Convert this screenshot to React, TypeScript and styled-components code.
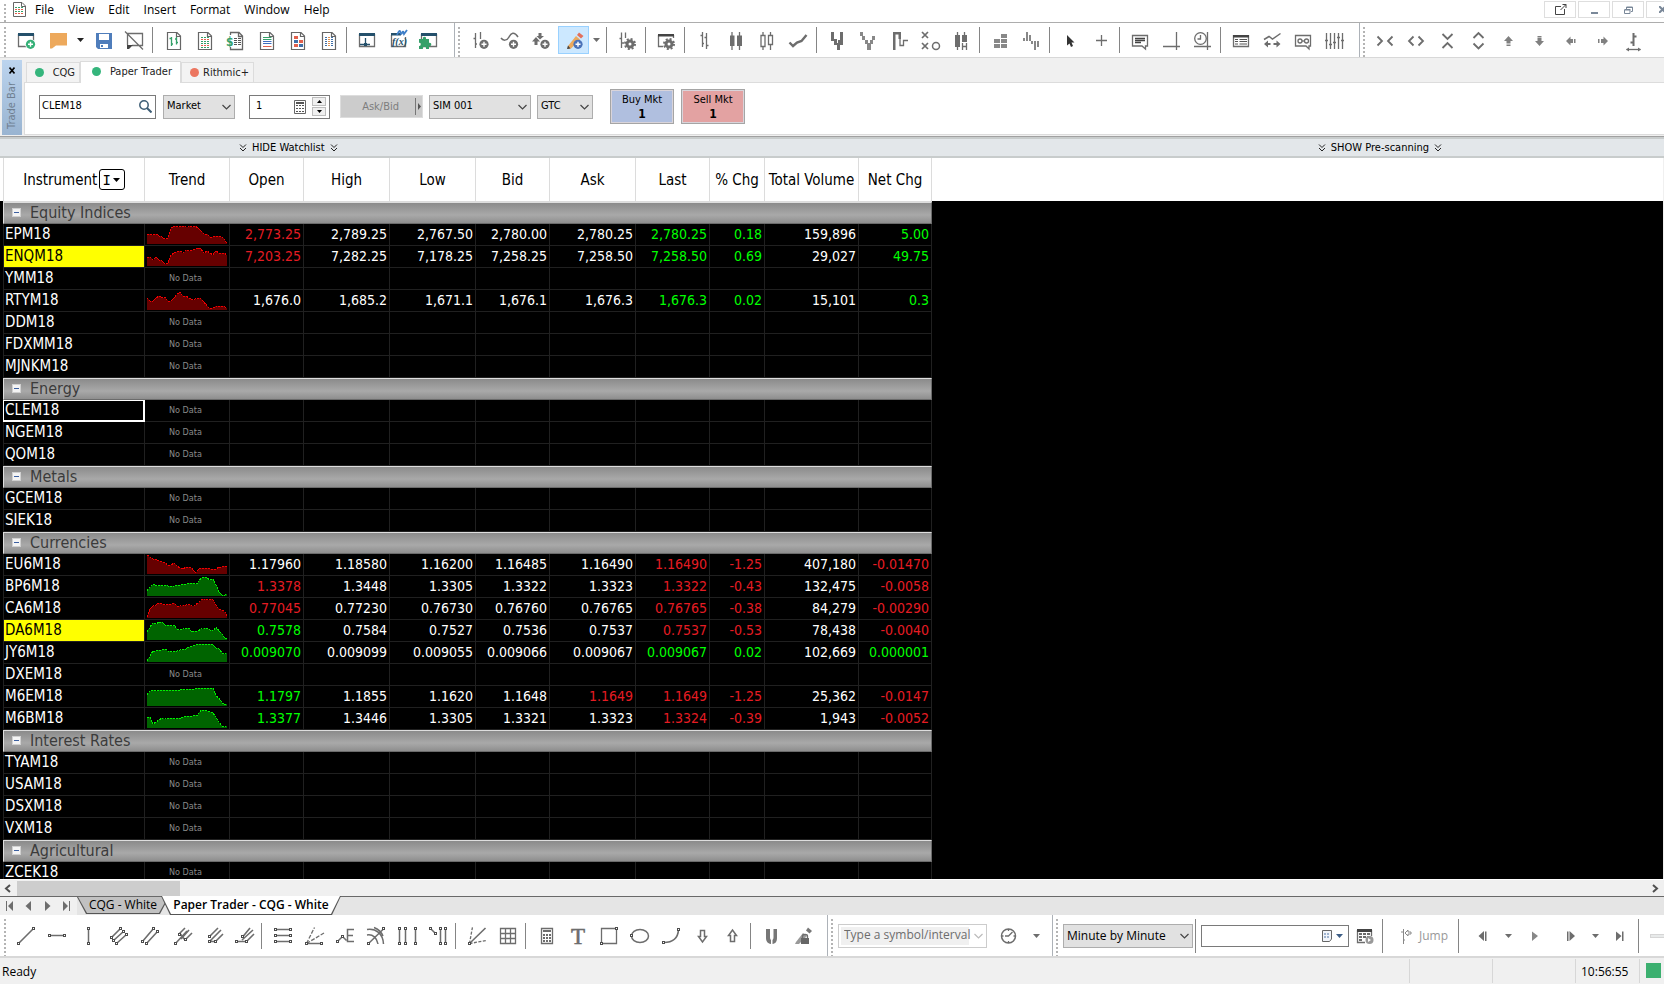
import React from "react";
import styled, { createGlobalStyle, css } from "styled-components";

const tahoma = `"DejaVu Sans Condensed", "DejaVu Sans", sans-serif`;
const segoe = `"Open Sans", "Noto Sans", sans-serif`;

const GlobalStyle = createGlobalStyle`
  *, *::before, *::after { box-sizing: border-box; }
  body { margin: 0; background: #f0f0f0; font-family: ${segoe}; font-size: 12px; color: #000; }
  button, input, select { font: inherit; color: inherit; margin: 0; padding: 0; border-radius: 0; }
  button { border: 0; background: none; }
  svg { display: block; flex: none; }
`;

/* ---------- page frame ---------- */

const Page = styled.div`
  display: flex;
  flex-direction: column;
  height: 100vh;
  overflow: hidden;
`;

const Grip = styled.span`
  flex: none;
  width: 2px;
  align-self: stretch;
  margin: 2px 5px 0 3px;
  background: repeating-linear-gradient(#fff 0 2px, #b4b4b4 2px 4px);
`;

const MenuBar = styled.header`
  display: flex;
  align-items: stretch;
  height: 23px;
  flex: none;
  padding-left: 1px;
  background: #fff;
  border-bottom: 1px solid #adadad;
`;

const AppMark = styled.span`
  align-self: center;
  padding: 0 9px 4px 2px;
`;

const MenuNav = styled.nav`
  display: flex;
  align-items: center;
  gap: 14px;
  flex: 1;
  padding-bottom: 3px;
`;

const MenuItem = styled.button`
  line-height: 16px;
`;

const WindowButtons = styled.div`
  display: flex;
  gap: 2px;
  padding-top: 1px;
  width: 120px;
  overflow: hidden;
`;

const WindowButton = styled.button`
  display: flex;
  align-items: center;
  justify-content: center;
  flex: none;
  width: 32px;
  height: 17px;
  border: 1px solid #dedede;
  background: #fff;
`;

/* ---------- toolbars ---------- */

const Toolbar = styled.div<{ $tall?: boolean }>`
  display: flex;
  align-items: stretch;
  flex: none;
  height: ${(p) => (p.$tall ? 43 : 35)}px;
  padding-left: 1px;
  background: #fff;
  border-bottom: ${(p) => (p.$tall ? 2 : 1)}px solid #d8d8d8;
  overflow: hidden;
`;

const ToolGroup = styled.div<{ $last?: boolean; $pad?: number }>`
  display: flex;
  align-items: center;
  flex: ${(p) => (p.$last ? "1" : "none")};
  padding-right: ${(p) => p.$pad ?? 9}px;
  border-right: ${(p) => (p.$last ? "0" : "1px solid #adb2b8")};
`;

const ToolButton = styled.button<{ $active?: boolean; $width?: number }>`
  display: flex;
  align-items: center;
  justify-content: center;
  flex: none;
  width: ${(p) => p.$width ?? 31}px;
  height: 28px;
  color: #6d6d6d;
  ${(p) =>
    p.$active &&
    css`
      background: #cce8ff;
      box-shadow: inset 0 0 0 1px #99d1ff;
    `}
`;

const Separator = styled.span<{ $height?: number }>`
  flex: none;
  width: 1px;
  height: ${(p) => p.$height ?? 26}px;
  margin: 0 5px 0 2px;
  background: #858585;
`;

/* ---------- trade bar ---------- */

const TradeBar = styled.section`
  display: flex;
  flex: none;
  height: 79px;
  padding: 2px 0 1px 2px;
  background: #f0f0f0;
  border-bottom: 1px solid #a0a0a0;
`;

const TradeHandle = styled.div`
  display: flex;
  flex-direction: column;
  align-items: center;
  gap: 8px;
  width: 20px;
  padding-top: 7px;
  background: linear-gradient(#bcd4ee, #99b4d1);
  font: 11px/14px ${tahoma};
  color: #6f7f90;
`;

const HandleLabel = styled.span`
  writing-mode: vertical-rl;
  transform: rotate(180deg);
`;

const TradeMain = styled.div`
  display: flex;
  flex-direction: column;
  flex: 1;
  margin-left: 2px;
`;

const AccountTabs = styled.div`
  display: flex;
  align-items: flex-end;
  height: 22px;
  padding-left: 2px;
`;

const AccountTab = styled.button<{ $active?: boolean; $width: number }>`
  display: flex;
  align-items: center;
  justify-content: space-between;
  width: ${(p) => p.$width}px;
  height: ${(p) => (p.$active ? 22 : 20)}px;
  margin-bottom: ${(p) => (p.$active ? -1 : 0)}px;
  padding: ${(p) => (p.$active ? "0 8px 2px 11px" : "0 4px 0 8px")};
  position: relative;
  border: 1px solid #dcdcdc;
  border-bottom: 0;
  background: ${(p) => (p.$active ? "#fff" : "#f3f3f3")};
  font: 11px/14px ${tahoma};
  color: #222;
`;

const Dot = styled.span<{ $color: string }>`
  width: 9px;
  height: 9px;
  border-radius: 50%;
  background: ${(p) => p.$color};
`;

const OrderForm = styled.form`
  display: flex;
  align-items: center;
  flex: 1;
  padding: 0 0 4px 14px;
  background: #fff;
  border: 1px solid #dcdcdc;
  border-right: 0;
  font: 11px/14px ${tahoma};
`;

const Field = styled.div<{ $width: number; $gap?: number }>`
  display: flex;
  align-items: center;
  position: relative;
  width: ${(p) => p.$width}px;
  height: 24px;
  margin-right: ${(p) => p.$gap ?? 6}px;
  padding-right: 3px;
  border: 1px solid #7a7a7a;
  background: #fff;
`;

const TextInput = styled.input<{ $indent?: number }>`
  flex: 1;
  min-width: 0;
  height: 100%;
  padding: 0 0 3px ${(p) => p.$indent ?? 2}px;
  border: 0;
  outline: 0;
  background: transparent;
`;

const SelectBox = styled.div<{ $width: number; $gap?: number; $light?: boolean }>`
  position: relative;
  flex: none;
  width: ${(p) => p.$width}px;
  height: 24px;
  margin-right: ${(p) => p.$gap ?? 0}px;
  & > select {
    appearance: none;
    width: 100%;
    height: 100%;
    padding: ${(p) => (p.$light ? "0 14px 2px 5px" : "0 18px 1px 3px")};
    border: 1px solid ${(p) => (p.$light ? "#ccc" : "#adadad")};
    background: ${(p) => (p.$light ? "linear-gradient(#f0f0f0, #f0f0f0) 2px 2px / 128px 18px no-repeat #fff" : "#e1e1e1")};
    color: ${(p) => (p.$light ? "#6d6d6d" : "#000")};
    outline: 0;
  }
  & > svg {
    position: absolute;
    right: 3px;
    top: 9px;
    pointer-events: none;
    color: ${(p) => (p.$light ? "#bbb" : "#444")};
  }
`;

const Spinner = styled.div`
  display: flex;
  flex-direction: column;
  gap: 1px;
  margin-left: 6px;
`;

const SpinButton = styled.button`
  display: flex;
  align-items: center;
  justify-content: center;
  width: 14px;
  height: 9px;
  border: 1px solid #bdbdbd;
  background: #f0f0f0;
`;

const AskBid = styled.button`
  display: flex;
  align-items: center;
  justify-content: flex-end;
  gap: 16px;
  width: 83px;
  height: 23px;
  margin-right: 6px;
  border: 1px solid #ddd;
  background: #ccc;
  color: #7d7d7d;
`;

const MarketButton = styled.button<{ $tone: string }>`
  display: flex;
  flex-direction: column;
  align-items: center;
  justify-content: center;
  width: 64px;
  height: 35px;
  margin-right: 7px;
  border: 1px solid #a5a5a5;
  box-shadow: inset 0 0 0 1px #d9d4da;
  background: ${(p) => p.$tone};
  font: 11px/14px ${tahoma};
  & > b {
    font-size: 12px;
  }
`;

/* ---------- watchlist ---------- */

const PaneBar = styled.div`
  display: flex;
  align-items: center;
  justify-content: space-between;
  flex: none;
  height: 21px;
  padding: 0 222px 0 239px;
  background: #e3e7ea;
  border: solid #c8cccc;
  border-width: 2px 0;
`;

const PaneToggle = styled.button`
  display: flex;
  align-items: center;
  gap: 5px;
  font: 11px/14px ${tahoma};
`;

const Sheet = styled.main`
  flex: 1;
  min-height: 0;
  overflow: hidden;
  margin-right: 1px;
  padding-left: 3px;
  background: linear-gradient(#fff 43px, #000 43px);
`;

const Quotes = styled.table`
  table-layout: fixed;
  width: 929px;
  border-collapse: separate;
  border-spacing: 0;
  font: 14px/18px ${tahoma};
  color: #fff;
`;

const HeadCell = styled.th`
  height: 44px;
  padding: 0;
  border-right: 1px solid #dcdcdc;
  border-bottom: 1px solid #dcdcdc;
  background: #fff;
  color: #000;
  font-size: 15px;
  font-weight: normal;
  white-space: nowrap;
  &:first-child {
    border-left: 1px solid #dcdcdc;
  }
`;

const HeadInner = styled.div`
  display: flex;
  align-items: center;
  justify-content: center;
  gap: 2px;
`;

const SortButton = styled.button`
  display: flex;
  align-items: center;
  gap: 2px;
  height: 21px;
  padding: 0 4px 0 2px;
  border: 1px solid #000;
  border-radius: 3px;
  font-family: "DejaVu Sans Mono", monospace;
  font-size: 14px;
`;

const SectionCell = styled.td`
  height: 22px;
  padding: 0 0 0 8px;
  border: solid #dedede;
  border-width: 1px 1px 1px 1px;
  border-bottom-color: #6b6b6b;
  border-right-color: #6b6b6b;
  background: linear-gradient(#8b8b8b, #a9a9a9 60%, #8e8e8e);
  color: #3b3b3b;
  font-size: 16px;
`;

const SectionInner = styled.div`
  display: flex;
  align-items: center;
  gap: 9px;
  height: 20px;
`;

const Collapse = styled.button`
  display: flex;
  width: 9px;
  height: 9px;
  margin-bottom: 2px;
  background: #f4f4f4;
  border: 1px solid #d0d0d0;
`;

const SymbolCell = styled.th<{ $mark?: "hot" | "cursor" }>`
  height: 22px;
  padding: 0 0 1px 1px;
  border: solid ${(p) => (p.$mark === "cursor" ? "#fff" : "#202020")};
  border-width: 0 1px 1px 1px;
  text-align: left;
  font-size: 15px;
  font-weight: normal;
  background: ${(p) => (p.$mark === "hot" ? "#ff0" : "#000")};
  color: ${(p) => (p.$mark === "hot" ? "#000" : "#fff")};
  ${(p) => p.$mark === "cursor" && "box-shadow: inset 0 1px #fff, inset -1px -1px #fff;"}
`;

const tones = { w: "#fff", g: "#0f0", r: "#e51c23" };
type Tone = keyof typeof tones;

const ValueCell = styled.td<{ $tone: Tone }>`
  height: 22px;
  padding: 0 2px 1px 0;
  border: solid #202020;
  border-width: 0 1px 1px 0;
  text-align: right;
  color: ${(p) => tones[p.$tone]};
`;

const TrendCell = styled.td`
  height: 22px;
  padding: 0 2px 1px;
  border: solid #202020;
  border-width: 0 1px 1px 0;
`;

const NoData = styled.div`
  padding-right: 3px;
  font-size: 9px;
  line-height: 18px;
  text-align: center;
  color: #8a8a8a;
`;

/* ---------- bottom bars ---------- */

const ScrollTrack = styled.div`
  display: flex;
  align-items: center;
  flex: none;
  height: 17px;
  padding: 0 5px 0 4px;
  background: #f0f0f0;
  border-top: 1px solid #fff;
`;

const ScrollThumb = styled.div`
  width: 163px;
  height: 15px;
  margin: 0 auto 0 5px;
  background: #cdcdcd;
`;

const SheetTabs = styled.div`
  display: flex;
  align-items: flex-start;
  flex: none;
  height: 19px;
  background: #e5e5e5;
  border-top: 1px solid #696969;
`;

const SheetNav = styled.div`
  display: flex;
  height: 18px;
  width: 77px;
  background: #f0f0f0;
`;

const SheetNavButton = styled.button`
  display: flex;
  align-items: center;
  justify-content: center;
  width: 19px;
  color: #6d6d6d;
`;

const SheetTab = styled.button<{ $active?: boolean; $width: number }>`
  position: relative;
  z-index: 0;
  width: ${(p) => p.$width}px;
  height: ${(p) => (p.$active ? 19 : 17)}px;
  margin: ${(p) => (p.$active ? "-1px 0 0 -8px" : "0")};
  padding-bottom: 1px;
  line-height: 16px;
  white-space: nowrap;
  font-weight: ${(p) => (p.$active ? 600 : 400)};
  background: #555;
  clip-path: polygon(0 0, 9px 100%, calc(100% - 9px) 100%, 100% 0);
  &::before {
    content: "";
    position: absolute;
    inset: 0;
    z-index: -1;
    background: ${(p) => (p.$active ? "#fff" : "#c1c1c1")};
    clip-path: polygon(1px 0, 10px calc(100% - 1px), calc(100% - 10px) calc(100% - 1px), calc(100% - 1px) 0);
  }
`;

const DateField = styled.div`
  display: flex;
  align-items: center;
  gap: 2px;
  flex: none;
  width: 148px;
  height: 22px;
  padding-right: 5px;
  border: 1px solid #7a7a7a;
  background: #fff;
`;

const JumpButton = styled.button`
  display: flex;
  align-items: center;
  gap: 6px;
  flex: none;
  width: 68px;
  padding-left: 9px;
  color: #999;
`;

const SpeedSlider = styled.input`
  appearance: none;
  flex: none;
  width: 90px;
  height: 4px;
  margin-left: 6px;
  background: #e8eaea;
  border: 1px solid #d6d6d6;
  &::-webkit-slider-thumb {
    appearance: none;
    width: 1px;
  }
`;

const StatusBar = styled.footer`
  display: flex;
  align-items: stretch;
  flex: none;
  height: 26px;
  padding: 1px 3px 1px 2px;
  background: #f0f0f0;
  line-height: 26px;
`;

const StatusPane = styled.div<{ $width?: number }>`
  ${(p) => (p.$width ? `width: ${p.$width}px; border-left: 1px solid #d7d7d7; padding-left: 5px;` : "flex: 1;")}
`;

const StatusLight = styled.span`
  align-self: center;
  width: 15px;
  height: 15px;
  margin: 0 0 1px 1px;
  background: #3cb070;
`;

/* ---------- icon parts ---------- */

const Icon = ({ children }: { children: React.ReactNode }) => (
  <svg width="27" height="28" viewBox="0 0 27 28" fill="none" stroke="currentColor" strokeWidth="1.3" aria-hidden="true">
    {children}
  </svg>
);

const Fill = ({ d, c = "currentColor" }: { d: string; c?: string }) => <path d={d} fill={c} stroke="none" />;

const PlusBadge = ({ x, y, c = "#6d6d6d" }: { x: number; y: number; c?: string }) => (
  <g>
    <circle cx={x} cy={y} r="4.6" fill={c} stroke="none" />
    <path d={`M${x - 2.5} ${y}h5M${x} ${y - 2.5}v5`} stroke="#fff" strokeWidth="1.4" />
  </g>
);

const Gear = ({ x, y }: { x: number; y: number }) => (
  <g>
    <circle cx={x} cy={y} r="3" strokeWidth="3" />
    <circle cx={x} cy={y} r="5" strokeWidth="2" strokeDasharray="2 1.93" />
  </g>
);

const Knots = ({ at }: { at: [number, number][] }) => (
  <>
    {at.map(([x, y]) => (
      <rect key={`${x}-${y}`} x={x - 1} y={y - 1} width="2" height="2" fill="#fff" stroke="#4c4c4c" strokeWidth="1" />
    ))}
  </>
);

const DocFrame = () => <path d="M7.5 6.5H17L20.5 10V23.5H7.5ZM16.5 6.5V10.5H20.5" stroke="#666" strokeWidth="1.2" />;

const WindowFrame = ({ c = "#24506b" }: { c?: string }) => (
  <>
    <path d="M5.5 8V20.5H20.5V8" />
    <Fill d="M5 7H21V10H5Z" c={c} />
  </>
);

const Caret = ({ c = "currentColor" }: { c?: string }) => (
  <svg width="7" height="4" viewBox="0 0 7 4" aria-hidden="true">
    <path d="M0 0H7L3.5 4Z" fill={c} />
  </svg>
);

const Chevron = () => (
  <svg width="11" height="7" viewBox="0 0 11 7" fill="none" stroke="currentColor" strokeWidth="1.2" aria-hidden="true">
    <path d="M1.5 1L5.5 5L9.5 1" />
  </svg>
);

const DoubleDown = () => (
  <svg width="8" height="8" viewBox="0 0 8 8" fill="none" stroke="#222" aria-hidden="true">
    <path d="M1 .5L4 3.5L7 .5M1 4L4 7L7 4" />
  </svg>
);

const grid = (xs: number[], ys: number[], w: number, h: number) =>
  ys.map((y) => xs.map((x) => `M${x} ${y}h${w}v${h}h-${w}z`).join("")).join("");

type Tool = { label: string; icon?: React.ReactNode; active?: boolean; caret?: boolean; caretColor?: string } | "|";

const fileTools: Tool[] = [
  { label: "New page", icon: <><WindowFrame /><circle cx="17.5" cy="18.3" r="5.4" fill="#fff" stroke="none" /><PlusBadge x={17.5} y={18.3} c="#35b077" /></> },
  { label: "Open", icon: <Fill d="M6 7H23V19.5H12L8 22.5H6Z" c="#eda95c" /> },
  { label: "Open recent", caret: true, caretColor: "#222" },
  { label: "Save", icon: <><Fill d="M6 7H22V23H8L6 21Z" c="#4f7dbb" /><Fill d="M9 8H19V14H9Z" c="#fff" /><Fill d="M10 18H18V22H10Z" c="#fff" /><Fill d="M11 19H13V21H11Z" c="#4f7dbb" /></> },
  { label: "Close chat", icon: <><path d="M6.5 19V7.5H21.5V19.5H11M4 5.5L22 23.5" /><Fill d="M6 19H12L8 23H6Z" c="#444" /></> },
  "|",
  { label: "Chart", icon: <><DocFrame /><path d="M11.5 11V20M9.5 12.5H11.5M11.5 18H13M16.5 11V18.5M15 13H16.5M16.5 16.5H18" stroke="#35a069" /></> },
  { label: "Quotes", icon: <><DocFrame /><Fill d={grid([10, 13, 16], [11, 17], 2, 1)} c="#35a069" /><Fill d={grid([10, 13, 16], [13, 19], 2, 1)} c="#e2604c" /><Fill d={grid([10, 13, 16], [15, 21], 2, 1)} c="#35a069" /></> },
  { label: "Accounts", icon: <><path d="M8.5 9V6.5H17L20.5 10V23.5H8.5V21M16.5 6.5V10.5H20.5" stroke="#666" /><text x="4" y="20" fontFamily="DejaVu Sans Condensed" fontSize="12" fontWeight="bold" fill="#35a069" stroke="none">$</text><Fill d={grid([12, 16], [12, 14, 16, 18], 3, 1)} c="#555" /></> },
  { label: "Orders", icon: <><DocFrame /><path d="M10 11.5H18.5M10 13.5H18.5" stroke="#35a069" strokeWidth="1" /><path d="M10 15.5H18.5M10 17.5H18.5" stroke="#3f6fc0" strokeWidth="1" /><path d="M10 20.5H18.5" stroke="#e2604c" strokeWidth="1" /></> },
  { label: "Positions", icon: <><DocFrame /><Fill d={grid([10], [10, 18], 4, 3)} c="#e2604c" /><Fill d={grid([15], [14], 4, 3)} c="#e2604c" /><Fill d={grid([10], [14], 4, 3) + grid([15], [18], 4, 3)} c="#3f6fa8" /></> },
  { label: "Report", icon: <><DocFrame /><Fill d={grid([10, 16], [11, 13, 15, 17, 19], 2, 1)} c="#3f6fa8" /><Fill d={grid([13], [11, 13, 15, 17, 19], 2, 1)} c="#e2904c" /></> },
  "|",
  { label: "Price window", icon: <><WindowFrame /><path d="M6 18.5H16M11.5 12V18.5" stroke="#24506b" /><Fill d="M10 17H13V20H10Z" c="#24506b" /></> },
  { label: "Formula", icon: <><path d="M6.5 9V20.5H20.5V11" /><Fill d="M6 7H16V9.5H6Z" c="#24506b" /><text x="7" y="19" fontFamily="Liberation Serif" fontStyle="italic" fontWeight="bold" fontSize="10" fill="#24506b" stroke="none">f(x)</text><path d="M12 9C14 4 15 4 15.5 6.5S17 8 18 5M18 5L19 8L22 4" stroke="#3f7fc8" strokeWidth="1.8" /></> },
  { label: "Add-ons", icon: <><WindowFrame /><Fill d="M3 13H7C6 10 11 10 10 13H13V17C16 16 16 21 13 20V23H10C11 20 6 20 7 23H3V20C5.5 20.5 5.5 16 3 17Z" c="#35a069" /></> },
];

const chartTools: Tool[] = [
  { label: "Add study", icon: <><path d="M8.5 7V22M6.5 12.5H8.5M8.5 18H10M13.5 6V13" /><PlusBadge x={17} y={18.3} /></> },
  { label: "Add curve", icon: <><path d="M3 12C5 15 9 15 11 11S16 5 20 11" strokeWidth="1.5" /><PlusBadge x={15.5} y={18.3} /></> },
  { label: "Add signal", icon: <><Fill d="M7 11L11 15.500H8.5V19H5.5V15.5H3ZM11 13.5L7.5 10H9.5V7H12.5V10H15Z" /><PlusBadge x={16} y={18.3} /></> },
  { label: "Draw", active: true, icon: <><Fill d="M8 20L16 10L20 13.5L11 22.5L7.5 23Z" c="#eda95c" /><Fill d="M17 9L19 6.5L23.5 10L21 12.5Z" c="#e2705c" /><Fill d="M7 23L8 19.5L10.5 22.5Z" c="#444" /><PlusBadge x={18} y={18.3} c="#4a72b8" /></> },
  { label: "Draw options", caret: true },
  "|",
  { label: "Study settings", icon: <><path d="M7.5 6.5V22M5.5 12.5H7.5M7.5 17H10M11.5 6.5V12" /><Gear x={16} y={18} /></> },
  "|",
  { label: "Window settings", icon: <><path d="M5.5 9V20.5H10M20.5 9V12" /><Fill d="M5 8H21V10.5H5Z" c="#444" /><Gear x={16} y={18} /></> },
  "|",
  { label: "Bars", icon: <path d="M10.5 6V21M8.5 9.5H10.5M10.5 17.5H12M14.5 7V23M12.5 11.5H14.5M14.5 19.5H16.5" /> },
  { label: "Candles", icon: <><path d="M9 6V24M16.5 6V24" /><Fill d="M7 9.5H11.5V20H7ZM14 9.5H19V20H14Z" /></> },
  { label: "Hollow candles", icon: <path d="M9 6V9.5M9 20.5V24M16.5 6V9.5M16.5 18.5V24M7 9.5H11V20.5H7ZM14.5 9.5H18.5V18.5H14.5Z" /> },
  { label: "Line", icon: <path d="M4.5 16.5L8 20L12 16.5L16.5 15L21.5 9" strokeWidth="2.4" /> },
  "|",
  { label: "Point bars", icon: <Fill d="M7 6H10V13H13V17H14V14H16V6H19V19H16V24H13V19H10V15H7Z" /> },
  { label: "Swing", icon: <Fill d="M5 6H8V10H10V14H13V17H15V14H17V10H20V14H18V18H16V24H12V18H10V14H7V10H5Z" c="#888" /> },
  { label: "Kagi", icon: <><Fill d="M7 6H15V13H12.5V8.5H9.5V24H7Z" /><path d="M14 13V19.5H17.5V14.5H22" /></> },
  { label: "Point and figure", icon: <><path d="M5 6L11 12M11 6L5 12M5 17L11 23M11 17L5 23" strokeWidth="1.7" /><circle cx="19" cy="20" r="3.500" strokeWidth="1.5" /></> },
  { label: "Heikin", icon: <><path d="M9.5 6V24M16.5 6V16M14.5 17V24M18.5 17V24M14.5 20.5H18.5" /><Fill d="M7 9H12V21H7ZM14 9H19V16H14Z" /></> },
  "|",
  { label: "Profile", icon: <Fill d="M14 8H20V12H14ZM7 13H13V17H7ZM14 13H20V17H14ZM7 18H13V22H7ZM14 18H20V22H14Z" c="#888" /> },
  { label: "Volume", icon: <Fill d="M5 12H7V15H5ZM8 6H10V15H8ZM11 9H13V15H11ZM13 15H15V18H13ZM16 15H18V24H16ZM19 15H21V21H19Z" c="#888" /> },
  "|",
  { label: "Pointer", icon: <Fill d="M10 9V19.5L12.5 17.5L14 21L16 20L14.5 16.5H17.5Z" c="#333" /> },
  { label: "Crosshair", icon: <path d="M8 14.5H19M13.5 9V20" /> },
  "|",
  { label: "Note", icon: <><path d="M5.5 9.5H20.5V20H18.5V23L15 20H5.5Z" /><path d="M8 12.5H18M8 14.5H18M8 16.5H14" stroke="#444" /></> },
  { label: "Axes", icon: <path d="M5 20.5H22M18.5 6V24" /> },
  { label: "Time axis", icon: <><circle cx="11.5" cy="12.5" r="5.8" /><path d="M11.5 9V13H8.5M5 20.5H22M18.5 6V24" /></> },
  "|",
  { label: "Table", icon: <><path d="M5.5 9V20.5H20.5V9" /><Fill d="M5 9H21V11.5H5Z" c="#444" /><path d="M7 13.5H10M11.5 13.5H19M7 15.5H10M11.5 15.5H19M7 18H10M11.5 18H19" strokeWidth="1" stroke="#555" /></> },
  { label: "Compare", icon: <><path d="M5 13.5L10 10.5L13.5 13L21.5 7.5" strokeWidth="1.5" /><Fill d="M5 18L9 14.5V17H11.5V19H9V21.5ZM21.5 18L17.5 14.5V17H14.5V19H17.5V21.5Z" /></> },
  { label: "Preview", icon: <><path d="M5.5 9.5H20.5V20H19V23L16 20H5.5Z" /><circle cx="10" cy="15" r="2" /><circle cx="16.5" cy="15" r="2" /><path d="M12 15H14.5" /></> },
  { label: "Levels", icon: <path d="M5.5 7V23M9.5 7V23M13.5 7V23M17.5 7V23M21.5 7V23M4 14.5H7M8 18.5H11M12 16.5H15M16 11.5H19M20 14.5H23" /> },
];

const scaleTools: Tool[] = [
  { label: "Compress time", icon: <path d="M5.5 10.5L10 15L5.5 19.5M20.5 10.5L16 15L20.5 19.5" strokeWidth="1.8" /> },
  { label: "Expand time", icon: <path d="M10.5 10.5L6 15L10.5 19.5M15.5 10.5L20 15L15.5 19.5" strokeWidth="1.8" /> },
  { label: "Compress price", icon: <path d="M8.5 8L13.5 13L18.5 8M8.5 22L13.5 17L18.5 22" strokeWidth="1.8" /> },
  { label: "Expand price", icon: <path d="M8.5 12L13.5 7L18.5 12M8.5 17.5L13.5 22.5L18.5 17.5" strokeWidth="1.8" /> },
  { label: "Shift up", icon: <Fill d="M12.5 10L17 15H14.5V17.500H10.5V15H8ZM10.5 18.5H14.5V20H10.5Z" c="#808080" /> },
  { label: "Shift down", icon: <Fill d="M12.5 20L17 15H14.5V12H10.5V15H8ZM10.5 10H14.5V11.500H10.5Z" c="#808080" /> },
  { label: "Shift left", icon: <Fill d="M8 15L12.5 10.5V13H15V17H12.5V19.5ZM16 13H17.5V17H16Z" c="#808080" /> },
  { label: "Shift right", icon: <Fill d="M19 15L14.5 10.5V13H12V17H14.5V19.5ZM9 13H10.5V17H9Z" c="#808080" /> },
  { label: "Bar spacing", icon: <><path d="M13.5 7V20M13.5 10.5H16.5M10.5 16.5H13.5" strokeWidth="2" /><path d="M6.5 23.5H20.5" /><Fill d="M6 23.5L9 21.5V25.5ZM21 23.5L18 21.5V25.5Z" /></> },
];

const drawTools: Tool[] = [
  { label: "Trend line", icon: <><path d="M5.5 21.5L20.5 6.5" strokeWidth="1.6" /><Knots at={[[5.5, 21.5], [20.5, 6.5]]} /></> },
  { label: "Horizontal line", icon: <><path d="M5.5 13.5H20.5" strokeWidth="1.5" /><Knots at={[[5.5, 13.5], [20.5, 13.5]]} /></> },
  { label: "Vertical line", icon: <><path d="M13.5 6.5V21.5" strokeWidth="1.5" /><Knots at={[[13.5, 6.5], [13.5, 21.5]]} /></> },
  { label: "Parallel channel", icon: <><path d="M5.5 15.5L14.5 6.5M7.5 18.5L17.5 9.5M10.5 21.5L20.5 12.5" strokeWidth="1.6" /><Knots at={[[5.5, 15.5], [14.5, 6.5], [7.5, 18.5], [17.5, 9.5], [10.5, 21.5], [20.5, 12.5]]} /></> },
  { label: "Regression", icon: <><path d="M5.5 19.5L16.5 6.5M9.5 21.5L20.5 9.5" strokeWidth="1.6" /><Knots at={[[5.5, 19.5], [16.5, 6.5], [9.5, 21.5], [20.5, 9.5]]} /></> },
  { label: "Pitchfork", icon: <><path d="M7.5 21.5L19 9M10.5 12.5L17 6M16.5 18.5L24 11M13 17L21 8M12 11.5L17 18" strokeWidth="1.6" /><Knots at={[[7.5, 21.5], [11.5, 12.5], [17.5, 17.5]]} /></> },
  { label: "Schiff pitchfork", icon: <><path d="M10.5 14.5L19 6M10.5 19.5L22 8M16.5 19.5L24 12M13 17L20 10M10.5 19.5H17" strokeWidth="1.6" /><Knots at={[[10.5, 14.5], [10.5, 19.5], [16.5, 19.5]]} /></> },
  { label: "Modified pitchfork", icon: <><path d="M13 14.5L20 6M12 18L23 8M16.5 19.5L24 12M6.5 19.5H17" strokeWidth="1.6" /><Knots at={[[12.5, 14.5], [6.5, 19.5], [16.5, 19.5]]} /></> },
  "|",
  { label: "Retracement", icon: <><path d="M6.5 7.5H22M6.5 13.5H22M6.5 19.5H22" strokeWidth="1.5" /><Knots at={[[6.5, 7.5], [21.5, 7.5], [6.5, 13.5], [21.5, 13.5], [6.5, 19.5], [21.5, 19.5]]} /></> },
  { label: "Fan", icon: <><path d="M6.5 21.5L14.5 5.5M6.5 21.5L24 11" strokeDasharray="4 1.5" /><path d="M6.5 21.5H21.5" strokeWidth="1.5" /><Knots at={[[6.5, 21.5], [21.5, 21.5]]} /></> },
  { label: "Elliott wave", icon: <><path d="M6.5 19.5L11.5 14.5L15.5 18.5M23 7.5H16.5V19.5H23M16.5 13.5H22" strokeWidth="1.5" /><Knots at={[[6.5, 19.5], [11.5, 14.5]]} /></> },
  { label: "Arcs", icon: <><path d="M6.5 21.5L22 6.5M5 7.5C14 6 21 12 21.5 22M5 13C11 12 15 16 16 22M12 5.5C16 7 19 9 21 14" strokeWidth="1.5" /><Knots at={[[6.5, 21.5], [21.5, 6.5]]} /></> },
  { label: "Time zones", icon: <><path d="M6.5 6.5V21.5M12.5 6.5V21.5M22.5 6.5V21.5" strokeWidth="1.5" /><Knots at={[[6.5, 6.5], [6.5, 21.5], [12.5, 6.5], [12.5, 21.5], [22.5, 6.5], [22.5, 21.5]]} /></> },
  { label: "Time extension", icon: <><path d="M6.5 6.5L11.5 11.5M16.5 6.5V21.5M21.5 6.5V21.5" strokeWidth="1.5" /><Knots at={[[6.5, 6.5], [11.5, 11.5], [16.5, 6.5], [16.5, 21.5], [21.5, 6.5], [21.5, 21.5]]} /></> },
  "|",
  { label: "Gann fan", icon: <><path d="M6.5 21.5L22.5 6" strokeWidth="1.6" /><path d="M6.5 21.5L9.5 5M6.5 21.5L24 18.5" strokeDasharray="3 1.5" /><Knots at={[[6.5, 21.5]]} /></> },
  { label: "Gann grid", icon: <path d="M6.5 6.5H21.5V21.5H6.5ZM11.5 6.5V21.5M16.5 6.5V21.5M6.5 11.5H21.5M6.5 16.5H21.5" /> },
  "|",
  { label: "Calculator", icon: <><path d="M8.5 6.5H19.5V21.5H8.5Z" /><Fill d={"M10 8H18V10H10Z" + grid([10, 13, 16], [12, 15, 18], 2, 2)} /></> },
  { label: "Text", icon: <text x="14" y="21.5" textAnchor="middle" fontFamily="Liberation Serif" fontSize="23" fill="#6d6d6d" stroke="#6d6d6d" strokeWidth=".6">T</text> },
  { label: "Rectangle", icon: <><path d="M6.5 6.5H21.5V21.5H6.5Z" /><Knots at={[[6.5, 21.5], [21.5, 6.5]]} /></> },
  { label: "Ellipse", icon: <><ellipse cx="14" cy="14" rx="8.5" ry="6.5" strokeWidth="1.5" /><Knots at={[[5.5, 13.5]]} /></> },
  { label: "Arc", icon: <><path d="M6.5 20.5C15 20.5 21 17 21.5 7.5" strokeWidth="1.6" /><Knots at={[[6.5, 20.5], [21.5, 7.5]]} /></> },
  { label: "Down arrow", icon: <path d="M12.5 8.5H16.5V14.5H18.5L14.5 20L10.5 14.5H12.5Z" strokeWidth="1.5" /> },
  { label: "Up arrow", icon: <path d="M11.5 19.5H15.5V13.5H17.5L13.5 8L9.5 13.5H11.5Z" strokeWidth="1.5" /> },
  "|",
  { label: "Magnet", icon: <Fill d="M8 7H12V15C12 17 12.5 17.5 13 18V22C9.5 21.5 8 19 8 16ZM19 7H15.5V15C15.5 17 15 17.5 14.5 18V22C18 21.5 19 19 19 16Z" c="#777" /> },
  { label: "Lock drawings", icon: <><Fill d="M7 20L14 11L18 14L10 22H6Z" c="#999" /><Fill d="M17 8.5L19 5.5L23 9L20.5 11.5Z" c="#777" /><Fill d="M12 16H20V22H12Z" c="#666" /><path d="M13.5 16V14C13.5 12 18.5 12 18.5 14V16" /></> },
];

const Tools = ({ items }: { items: Tool[] }) => (
  <>
    {items.map((t, i) =>
      t === "|" ? (
        <Separator key={i} />
      ) : t.caret ? (
        <ToolButton key={i} type="button" $width={15} aria-label={t.label}>
          <Caret c={t.caretColor} />
        </ToolButton>
      ) : (
        <ToolButton key={i} type="button" $active={t.active} aria-label={t.label}>
          <Icon>{t.icon}</Icon>
        </ToolButton>
      )
    )}
  </>
);

/* ---------- quote data ---------- */

type Trend = { tone: "r" | "g"; points: number[] };
type Row = { symbol: string; mark?: "hot" | "cursor"; trend?: Trend; values?: string[]; tones?: string };
type Section = { name: string; rows: Row[] };

const empty = (...symbols: string[]): Row[] => symbols.map((symbol) => ({ symbol }));

const sections: Section[] = [
  {
    name: "Equity Indices",
    rows: [
      { symbol: "EPM18", tones: "rwwwwggwg", values: ["2,773.25", "2,789.25", "2,767.50", "2,780.00", "2,780.25", "2,780.25", "0.18", "159,896", "5.00"], trend: { tone: "r", points: [10, 10, 9, 10, 8, 7, 5, 6, 16, 18, 17, 18, 18, 17, 18, 17, 18, 16, 13, 10, 10, 7, 7, 8, 8, 7, 4, 0] } },
      { symbol: "ENQM18", mark: "hot", tones: "rwwwwggwg", values: ["7,203.25", "7,282.25", "7,178.25", "7,258.25", "7,258.50", "7,258.50", "0.69", "29,027", "49.75"], trend: { tone: "r", points: [8, 9, 6, 9, 6, 5, 2, 3, 11, 13, 14, 15, 13, 16, 15, 16, 17, 18, 17, 13, 15, 13, 11, 15, 13, 13, 13, 10] } },
      ...empty("YMM18"),
      { symbol: "RTYM18", tones: "wwwwwggwg", values: ["1,676.0", "1,685.2", "1,671.1", "1,676.1", "1,676.3", "1,676.3", "0.02", "15,101", "0.3"], trend: { tone: "r", points: [12, 9, 9, 12, 14, 12, 13, 9, 9, 12, 16, 18, 14, 14, 12, 10, 11, 12, 11, 8, 4, 1, 2, 4, 4, 4, 3, 1] } },
      ...empty("DDM18", "FDXMM18", "MJNKM18"),
    ],
  },
  { name: "Energy", rows: [{ symbol: "CLEM18", mark: "cursor" }, ...empty("NGEM18", "QOM18")] },
  { name: "Metals", rows: empty("GCEM18", "SIEK18") },
  {
    name: "Currencies",
    rows: [
      { symbol: "EU6M18", tones: "wwwwwrrwr", values: ["1.17960", "1.18580", "1.16200", "1.16485", "1.16490", "1.16490", "-1.25", "407,180", "-0.01470"], trend: { tone: "r", points: [19, 17, 15, 15, 13, 12, 11, 9, 9, 11, 8, 6, 5, 7, 7, 6, 1, 4, 6, 6, 6, 5, 5, 5, 7, 7, 8, 8] } },
      { symbol: "BP6M18", tones: "rwwwwrrwr", values: ["1.3378", "1.3448", "1.3305", "1.3322", "1.3323", "1.3322", "-0.43", "132,475", "-0.0058"], trend: { tone: "g", points: [5, 9, 12, 10, 11, 10, 11, 10, 10, 10, 11, 11, 12, 12, 13, 13, 12, 13, 18, 19, 18, 16, 17, 11, 4, 1, 1, 3] } },
      { symbol: "CA6M18", tones: "rwwwwrrwr", values: ["0.77045", "0.77230", "0.76730", "0.76760", "0.76765", "0.76765", "-0.38", "84,279", "-0.00290"], trend: { tone: "r", points: [1, 9, 12, 13, 15, 14, 13, 14, 14, 15, 12, 12, 13, 13, 14, 12, 13, 15, 18, 19, 18, 19, 18, 13, 9, 8, 6, 2] } },
      { symbol: "DA6M18", mark: "hot", tones: "gwwwwrrwr", values: ["0.7578", "0.7584", "0.7527", "0.7536", "0.7537", "0.7537", "-0.53", "78,438", "-0.0040"], trend: { tone: "g", points: [8, 13, 17, 16, 18, 18, 15, 15, 14, 15, 11, 10, 11, 12, 12, 8, 9, 9, 11, 12, 12, 10, 9, 13, 9, 6, 2, 2] } },
      { symbol: "JY6M18", tones: "gwwwwggwg", values: ["0.009070", "0.009099", "0.009055", "0.009066", "0.009067", "0.009067", "0.02", "102,669", "0.000001"], trend: { tone: "g", points: [1, 6, 11, 11, 12, 12, 13, 11, 10, 11, 11, 12, 13, 13, 15, 16, 17, 18, 18, 18, 18, 18, 17, 14, 13, 9, 8, 10] } },
      ...empty("DXEM18"),
      { symbol: "M6EM18", tones: "gwwwrrrwr", values: ["1.1797", "1.1855", "1.1620", "1.1648", "1.1649", "1.1649", "-1.25", "25,362", "-0.0147"], trend: { tone: "g", points: [11, 15, 16, 15, 16, 16, 16, 16, 16, 16, 16, 16, 17, 16, 17, 17, 17, 18, 18, 18, 18, 18, 18, 10, 8, 3, 1, 2] } },
      { symbol: "M6BM18", tones: "gwwwwrrwr", values: ["1.3377", "1.3446", "1.3305", "1.3321", "1.3323", "1.3324", "-0.39", "1,943", "-0.0052"], trend: { tone: "g", points: [11, 11, 4, 6, 8, 10, 9, 10, 10, 9, 10, 9, 11, 12, 12, 12, 13, 13, 18, 18, 17, 16, 15, 11, 6, 2, 1, 3] } },
    ],
  },
  { name: "Interest Rates", rows: empty("TYAM18", "USAM18", "DSXM18", "VXM18") },
  { name: "Agricultural", rows: empty("ZCEK18") },
];

const columns = ["Trend", "Open", "High", "Low", "Bid", "Ask", "Last", "% Chg", "Total Volume", "Net Chg"];
const columnWidths = [142, 85, 74, 86, 86, 74, 86, 74, 55, 94, 73];

const Sparkline = ({ tone, points }: Trend) => {
  const [fill, line] = tone === "r" ? ["#660000", "#f00000"] : ["#006400", "#00f000"];
  const path = points.map((p, i) => `${Math.min(i * 3, 80)} ${19 - p}`).join("L");
  return (
    <svg width="80" height="19" viewBox="0 0 80 19" shapeRendering="crispEdges" role="img" aria-label="Trend">
      <path d={`M0 19L${path}L80 19Z`} fill={fill} />
      <path d={`M${path}`} fill="none" stroke={line} strokeDasharray="2 1" />
    </svg>
  );
};

const QuoteRow = ({ row }: { row: Row }) => (
  <tr>
    <SymbolCell scope="row" $mark={row.mark}>{row.symbol}</SymbolCell>
    <TrendCell>{row.trend ? <Sparkline {...row.trend} /> : <NoData>No Data</NoData>}</TrendCell>
    {columns.slice(1).map((c, i) => (
      <ValueCell key={c} $tone={(row.tones?.[i] ?? "w") as Tone}>{row.values?.[i]}</ValueCell>
    ))}
  </tr>
);

const SheetArrow = ({ d }: { d: string }) => (
  <svg width="9" height="10" viewBox="0 0 9 10" aria-hidden="true">
    <path d={d} fill="currentColor" />
  </svg>
);

export default function App() {
  return (
    <Page>
      <GlobalStyle />
      <MenuBar>
        <Grip />
        <AppMark>
          <svg width="13" height="15" viewBox="0 0 13 15" fill="none" aria-hidden="true">
            <path d="M.5 .5H9L12.5 4V14.5H.5ZM8.5 .5V4.5H12.5" stroke="#666" />
            <path d={grid([2, 5, 8], [5, 9], 2, 1)} fill="#35a069" />
            <path d={grid([2, 5, 8], [7, 11], 2, 1)} fill="#e2604c" />
          </svg>
        </AppMark>
        <MenuNav>
          {["File", "View", "Edit", "Insert", "Format", "Window", "Help"].map((m) => (
            <MenuItem key={m} type="button">{m}</MenuItem>
          ))}
        </MenuNav>
        <WindowButtons>
          <WindowButton type="button" aria-label="Detach">
            <svg width="13" height="11" viewBox="0 0 13 11" fill="none" stroke="#444"><path d="M7 2.5H1.5V10.5H10.5V5M6.5 6L12 .5M8.5 .5H12V4" /></svg>
          </WindowButton>
          <WindowButton type="button" aria-label="Minimize">
            <svg width="7" height="9" viewBox="0 0 7 9"><path d="M0 7H7V9H0Z" fill="#7a8899" /></svg>
          </WindowButton>
          <WindowButton type="button" aria-label="Restore">
            <svg width="9" height="8" viewBox="0 0 9 8" fill="none" stroke="#7a8899"><path d="M2.5 3V1H8.5V5.5H7M.5 4V7.5H6V4ZM2.5 1.5H8.5M.5 3.5H6.5" /></svg>
          </WindowButton>
          <WindowButton type="button" aria-label="Close">
            <svg width="7" height="7" viewBox="0 0 7 7" fill="none" stroke="#7a8899" strokeWidth="2"><path d="M0 0L7 7M7 0L0 7" /></svg>
          </WindowButton>
        </WindowButtons>
      </MenuBar>

      <Toolbar>
        <Grip />
        <ToolGroup><Tools items={fileTools} /></ToolGroup>
        <Grip />
        <ToolGroup><Tools items={chartTools} /></ToolGroup>
        <Grip />
        <ToolGroup $last><Tools items={scaleTools} /></ToolGroup>
      </Toolbar>

      <TradeBar>
        <TradeHandle>
          <button type="button" aria-label="Close trade bar">
            <svg width="6" height="7" viewBox="0 0 6 7" fill="none" stroke="#000" strokeWidth="1.6"><path d="M.5 .5L5.5 6.5M5.5 .5L.5 6.5" /></svg>
          </button>
          <HandleLabel>Trade Bar</HandleLabel>
        </TradeHandle>
        <TradeMain>
          <AccountTabs role="tablist">
            <AccountTab type="button" role="tab" $width={54}><Dot $color="#35b57c" />CQG</AccountTab>
            <AccountTab type="button" role="tab" aria-selected $active $width={101}><Dot $color="#35b57c" />Paper Trader</AccountTab>
            <AccountTab type="button" role="tab" $width={73}><Dot $color="#ec7660" />Rithmic+</AccountTab>
          </AccountTabs>
          <OrderForm>
            <Field $width={117} $gap={7}>
              <TextInput aria-label="Symbol" defaultValue="CLEM18" />
              <svg width="13" height="13" viewBox="0 0 13 13" fill="none" stroke="#3d5d75" strokeWidth="1.5"><circle cx="5" cy="5" r="4.2" /><path d="M8 8L12.5 12.5" strokeWidth="2" /></svg>
            </Field>
            <SelectBox $width={72} $gap={14}>
              <select aria-label="Order type"><option>Market</option></select>
              <Chevron />
            </SelectBox>
            <Field $width={81} $gap={10}>
              <TextInput aria-label="Quantity" defaultValue="1" $indent={6} />
              <svg width="12" height="14" viewBox="0 0 12 14" fill="none"><path d="M.5 .5H11.5V13.5H.5Z" stroke="#666" /><path d={"M2 2H10V4H2Z" + grid([2, 5, 8], [5, 8, 11], 2, 1)} fill="#555" /></svg>
              <Spinner>
                <SpinButton type="button" aria-label="Increase"><svg width="5" height="3" viewBox="0 0 5 3"><path d="M0 3H5L2.5 0Z" /></svg></SpinButton>
                <SpinButton type="button" aria-label="Decrease"><svg width="5" height="3" viewBox="0 0 5 3"><path d="M0 0H5L2.5 3Z" /></svg></SpinButton>
              </Spinner>
            </Field>
            <AskBid type="button">
              Ask/Bid
              <svg width="7" height="17" viewBox="0 0 7 17"><path d="M0 0H1V17H0Z" fill="#777" /><path d="M3 5L6 8.5L3 12Z" fill="#555" /></svg>
            </AskBid>
            <SelectBox $width={102} $gap={6}>
              <select aria-label="Account"><option>SIM 001</option></select>
              <Chevron />
            </SelectBox>
            <SelectBox $width={56} $gap={17}>
              <select aria-label="Duration"><option>GTC</option></select>
              <Chevron />
            </SelectBox>
            <MarketButton type="button" $tone="#b0bfdf">Buy Mkt<b>1</b></MarketButton>
            <MarketButton type="button" $tone="#e3a2a2">Sell Mkt<b>1</b></MarketButton>
          </OrderForm>
        </TradeMain>
      </TradeBar>

      <PaneBar>
        <PaneToggle type="button"><DoubleDown />HIDE Watchlist<DoubleDown /></PaneToggle>
        <PaneToggle type="button"><DoubleDown />SHOW Pre-scanning<DoubleDown /></PaneToggle>
      </PaneBar>

      <Sheet>
        <Quotes>
          <colgroup>{columnWidths.map((w, i) => <col key={i} style={{ width: w }} />)}</colgroup>
          <thead>
            <tr>
              <HeadCell scope="col">
                <HeadInner>Instrument<SortButton type="button">I<Caret /></SortButton></HeadInner>
              </HeadCell>
              {columns.map((c) => <HeadCell key={c} scope="col">{c}</HeadCell>)}
            </tr>
          </thead>
          {sections.map((s) => (
            <tbody key={s.name}>
              <tr>
                <SectionCell colSpan={11}>
                  <SectionInner>
                    <Collapse type="button" aria-label={`Collapse ${s.name}`}>
                      <svg width="7" height="7" viewBox="0 0 7 7"><path d="M1 3H6V4H1Z" fill="#3b5fa0" /></svg>
                    </Collapse>
                    {s.name}
                  </SectionInner>
                </SectionCell>
              </tr>
              {s.rows.map((r) => <QuoteRow key={r.symbol} row={r} />)}
            </tbody>
          ))}
        </Quotes>
      </Sheet>

      <ScrollTrack>
        <button type="button" aria-label="Scroll left"><svg width="8" height="9" viewBox="0 0 8 9" fill="none" stroke="#505050" strokeWidth="2"><path d="M6 1L2 4.5L6 8" /></svg></button>
        <ScrollThumb />
        <button type="button" aria-label="Scroll right"><svg width="8" height="9" viewBox="0 0 8 9" fill="none" stroke="#505050" strokeWidth="2"><path d="M2 1L6 4.5L2 8" /></svg></button>
      </ScrollTrack>

      <SheetTabs>
        <SheetNav>
          <SheetNavButton type="button" aria-label="First"><SheetArrow d="M1 0H2V10H1ZM8 0V10L3 5Z" /></SheetNavButton>
          <SheetNavButton type="button" aria-label="Previous"><SheetArrow d="M7 0V10L1.5 5Z" /></SheetNavButton>
          <SheetNavButton type="button" aria-label="Next"><SheetArrow d="M2 0V10L7.5 5Z" /></SheetNavButton>
          <SheetNavButton type="button" aria-label="Last"><SheetArrow d="M7 0H8V10H7ZM1 0V10L6 5Z" /></SheetNavButton>
        </SheetNav>
        <SheetTab type="button" $width={92}>CQG - White</SheetTab>
        <SheetTab type="button" $active $width={180}>Paper Trader - CQG - White</SheetTab>
      </SheetTabs>

      <Toolbar $tall>
        <Grip />
        <ToolGroup><Tools items={drawTools} /></ToolGroup>
        <Grip />
        <ToolGroup $pad={8}>
          <SelectBox $width={149} $light>
            <select aria-label="Symbol or interval"><option>Type a symbol/interval</option></select>
            <Chevron />
          </SelectBox>
          <ToolButton type="button" $width={42} aria-label="Interval">
            <Icon><circle cx="13.5" cy="14" r="7" strokeWidth="1.5" /><path d="M17.5 10L13.5 14H10M13.5 7V9M13.5 19V21M6.5 14H8.5M18.5 14H20.5" /></Icon>
          </ToolButton>
          <ToolButton type="button" $width={15} aria-label="Interval options"><Caret /></ToolButton>
        </ToolGroup>
        <Grip />
        <ToolGroup $last $pad={0}>
          <SelectBox $width={130}>
            <select aria-label="Playback step"><option>Minute by Minute</option></select>
            <Chevron />
          </SelectBox>
          <Separator $height={34} />
          <DateField>
            <TextInput aria-label="Playback date" />
            <svg width="13" height="14" viewBox="0 0 13 14" fill="none"><path d="M1.5 1.5H10.5V10L8.5 12.5H1.5Z" fill="#f2f5fa" stroke="#666" /><path d={grid([3, 6], [4, 7], 2, 2)} fill="#9fb4d0" /></svg>
            <Caret c="#3d5d85" />
          </DateField>
          <ToolButton type="button" aria-label="Date range">
            <Icon><path d="M6.5 8V20.5H14M20.5 8V14" /><Fill d="M6 7H21V10H6Z" c="#444" /><Fill d={grid([8, 12, 16], [11, 14], 3, 2) + grid([8], [17], 3, 2)} /><circle cx="18.5" cy="18" r="4" fill="#999" stroke="none" /><Fill d="M17 16V20L20 18Z" c="#fff" /></Icon>
          </ToolButton>
          <Separator $height={34} />
          <JumpButton type="button">
            <svg width="16" height="16" viewBox="0 0 16 16" fill="none" stroke="#888"><path d="M6.5 1V16M4 4H6.5M6.5 12H8M8 5L11 2V4H14V6H11V8Z" /></svg>
            Jump
          </JumpButton>
          <Separator $height={34} />
          <ToolButton type="button" $width={37} aria-label="Step back"><Icon><Fill d="M15 9V19L9.5 14ZM16 9.5H17.5V19H16Z" /></Icon></ToolButton>
          <ToolButton type="button" $width={15} aria-label="Step back options"><Caret /></ToolButton>
          <ToolButton type="button" $width={36} aria-label="Play"><Icon><Fill d="M11 9.5V19L17 14Z" c="#888" /></Icon></ToolButton>
          <ToolButton type="button" $width={36} aria-label="Step forward"><Icon><Fill d="M10 9.5H11.5V19H10ZM12.5 9V19L18 14Z" /></Icon></ToolButton>
          <ToolButton type="button" $width={15} aria-label="Step forward options"><Caret /></ToolButton>
          <ToolButton type="button" $width={33} aria-label="Jump to end"><Icon><Fill d="M10 9.5V19L15.5 14ZM16 9.5H17.5V19H16Z" /></Icon></ToolButton>
          <Separator $height={34} />
          <SpeedSlider type="range" aria-label="Playback speed" />
        </ToolGroup>
      </Toolbar>

      <StatusBar>
        <StatusPane>Ready</StatusPane>
        <StatusPane $width={83} />
        <StatusPane $width={83} />
        <StatusPane $width={64}>10:56:55</StatusPane>
        <StatusPane $width={6} />
        <StatusLight />
      </StatusBar>
    </Page>
  );
}
